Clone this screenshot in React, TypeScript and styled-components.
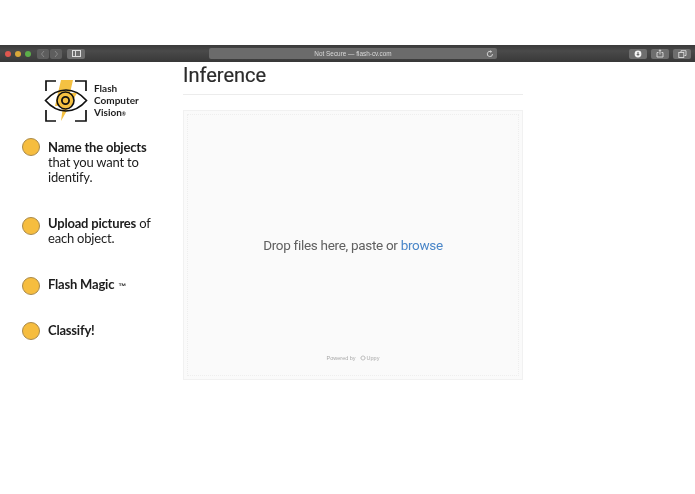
import React from "react";
import styled, { createGlobalStyle } from "styled-components";

const Global = createGlobalStyle`
  html, body { margin: 0; padding: 0; background: #fff; }
  #root { width: 695px; height: 494px; overflow: hidden; }
`;

const Page = styled.div`
  width: 695px;
  height: 494px;
  padding-top: 45px;
  box-sizing: border-box;
  display: flex;
  flex-direction: column;
  background: #fff;
  font-family: "Lato", "Liberation Sans", sans-serif;
  filter: blur(0.35px);
`;

const Toolbar = styled.div`
  height: 17px;
  flex: none;
  display: flex;
  align-items: center;
  background: linear-gradient(#3a3a3a, #4a4a4a 35%, #383838);
  padding: 0 4px 0 5px;
`;

const Light = styled.span<{ $c: string }>`
  width: 6px;
  height: 6px;
  border-radius: 50%;
  margin-right: 4px;
  background: ${(p) => p.$c};
`;

const NavGroup = styled.div`
  display: flex;
  gap: 1px;
  margin-left: 2px;
`;

const ToolButton = styled.div<{ $w?: number; $light?: boolean }>`
  width: ${(p) => p.$w ?? 18}px;
  height: 10px;
  border-radius: 2px;
  background: ${(p) => (p.$light ? "#6e6e6e" : "#5e5e5e")};
  display: flex;
  align-items: center;
  justify-content: center;
`;

const SidebarButton = styled(ToolButton)`
  margin-left: 5px;
`;

const AddressBar = styled.div`
  width: 288px;
  height: 11px;
  margin-left: 124px;
  border-radius: 2px;
  background: #6b6b6b;
  display: flex;
  align-items: center;
  position: relative;
  color: #d8d8d8;
  font: 6.4px "Liberation Sans", sans-serif;
  justify-content: center;
`;

const Reload = styled.svg`
  position: absolute;
  right: 3px;
  top: 1.5px;
`;

const RightTools = styled.div`
  margin-left: auto;
  display: flex;
  gap: 4px;
`;

const Main = styled.div`
  display: flex;
  flex: 1;
  align-items: flex-start;
`;

const Sidebar = styled.aside`
  width: 183px;
  flex: none;
  padding: 17px 0 0 22px;
  box-sizing: border-box;
`;

const Brand = styled.div`
  display: flex;
  align-items: center;
  gap: 6px;
  margin-left: 22px;
`;

const BrandName = styled.div`
  font-weight: 700;
  font-size: 10px;
  line-height: 12px;
  color: #1d1d1d;
`;

const Tiny = styled.span`
  font-size: 5px;
`;

const Steps = styled.ol`
  list-style: none;
  margin: 17px 0 0;
  padding: 0;
  color: #1c1c1c;
`;

const Step = styled.li<{ $h: number }>`
  display: flex;
  gap: 8px;
  height: ${(p) => p.$h}px;
  font-size: 13px;
  letter-spacing: -0.2px;
  line-height: 15px;
`;

const Dot = styled.span<{ $top: number }>`
  width: 16px;
  height: 16px;
  flex: none;
  margin-top: ${(p) => p.$top}px;
  border-radius: 50%;
  background: #f6bd3f;
  border: 1px solid #a98a4c;
`;

const Strong = styled.b`
  font-weight: 700;
`;

const TradeMark = styled.span`
  font: 700 8px "Liberation Sans", sans-serif;
  margin-left: 1px;
`;

const Content = styled.main`
  width: 340px;
  flex: none;
`;

const Title = styled.h1`
  margin: 0;
  height: 32px;
  font: 400 20px/26px "Roboto", "Liberation Sans", sans-serif;
  -webkit-text-stroke: 0.2px #2b2b2b;
  color: #2b2b2b;
  border-bottom: 1px solid #ececec;
`;

const Drop = styled.section`
  margin-top: 15px;
  height: 270px;
  box-sizing: border-box;
  background: #fafafa;
  border: 1px solid #f1f1f1;
  padding: 3px;
`;

const DropInner = styled.div`
  height: 100%;
  box-sizing: border-box;
  border: 1px dotted #eeeeee;
  display: flex;
  flex-direction: column;
  align-items: center;
`;

const DropText = styled.div`
  margin-top: 120px;
  font: 13.5px/20px "Roboto", "Liberation Sans", sans-serif;
  letter-spacing: -0.3px;
  color: #606060;
`;

const Browse = styled.span`
  color: #4a86c8;
`;

const Powered = styled.div`
  margin-top: auto;
  margin-bottom: 13px;
  font: 5.5px/8px "Liberation Sans", sans-serif;
  color: #a8a8a8;
  display: flex;
  align-items: center;
  gap: 4px;
  white-space: nowrap;
`;

const UppyMark = styled.span`
  display: inline-flex;
  align-items: center;
  gap: 1px;
`;

const Logo = () => (
  <svg width="44" height="44" viewBox="0 0 44 44" fill="none" aria-hidden="true">
    <path d="M17 1H29L26 14H33L17 42L19 27H11Z" fill="#f5c142" />
    <path d="M12 2H2V12M31 2H42V12M2 31V42H12M42 31V42H31" stroke="#111" strokeWidth="1.7" />
    <path d="M1.5 21.5C8 14 14 11 22 11C30 11 36 14 42.5 21.5C36 29 30 32 22 32C14 32 8 29 1.5 21.5Z" stroke="#111" strokeWidth="1.7" />
    <circle cx="21.5" cy="21.5" r="8.5" stroke="#111" strokeWidth="1.6" fill="#f5c142" />
    <circle cx="21.5" cy="21.5" r="3.6" stroke="#111" strokeWidth="1.8" />
  </svg>
);

const steps = [
  { h: 76, top: -2, body: <div><Strong>Name the objects</Strong><br />that you want to<br />identify.</div> },
  { h: 61, top: 1, body: <div><Strong>Upload pictures</Strong> of<br />each object.</div> },
  { h: 46, top: 0, body: <div><Strong>Flash Magic</Strong> <TradeMark>™</TradeMark></div> },
  { h: 30, top: -1, body: <div><Strong>Classify!</Strong></div> },
];

export default function App() {
  return (
    <Page>
      <Global />
      <Toolbar>
        <Light $c="#e0574f" />
        <Light $c="#d9a83a" />
        <Light $c="#5cae4a" />
        <NavGroup>
          <ToolButton $w={12}>
            <svg width="6" height="8" viewBox="0 0 6 8" fill="none"><path d="M4 1L1.5 4L4 7" stroke="#888" /></svg>
          </ToolButton>
          <ToolButton $w={12}>
            <svg width="6" height="8" viewBox="0 0 6 8" fill="none"><path d="M2 1L4.5 4L2 7" stroke="#888" /></svg>
          </ToolButton>
        </NavGroup>
        <SidebarButton $light>
          <svg width="9" height="7" viewBox="0 0 9 7" fill="none"><rect x=".5" y=".5" width="8" height="6" stroke="#ddd" /><path d="M3.5 1V6" stroke="#ddd" /></svg>
        </SidebarButton>
        <AddressBar>
          Not Secure — flash-cv.com
          <Reload width="8" height="8" viewBox="0 0 8 8" fill="none">
            <path d="M6.5 4A2.6 2.6 0 1 1 5 1.6M4.5 0.5L5.6 1.7L4.4 2.7" stroke="#ddd" strokeWidth=".9" />
          </Reload>
        </AddressBar>
        <RightTools>
          <ToolButton $light>
            <svg width="8" height="8" viewBox="0 0 8 8"><circle cx="4" cy="4" r="3.4" fill="#f2f2f2" /><path d="M4 2V5M2.8 4L4 5.4L5.2 4" stroke="#555" fill="none" /></svg>
          </ToolButton>
          <ToolButton $light>
            <svg width="8" height="9" viewBox="0 0 8 9" fill="none"><path d="M2.5 3.5H1V8H7V3.5H5.5M4 5.5V.8M2.8 2L4 .8L5.2 2" stroke="#ddd" strokeWidth=".9" /></svg>
          </ToolButton>
          <ToolButton $light>
            <svg width="9" height="8" viewBox="0 0 9 8" fill="none"><rect x=".8" y="2.5" width="5" height="5" stroke="#ddd" strokeWidth=".9" /><path d="M3 2V.7H8V5.5H6.5" stroke="#ddd" strokeWidth=".9" /></svg>
          </ToolButton>
        </RightTools>
      </Toolbar>
      <Main>
        <Sidebar>
          <Brand>
            <Logo />
            <BrandName>Flash<br />Computer<br />Vision<Tiny>®</Tiny></BrandName>
          </Brand>
          <Steps>
            {steps.map((s, i) => (
              <Step key={i} $h={s.h}>
                <Dot $top={s.top} />
                {s.body}
              </Step>
            ))}
          </Steps>
        </Sidebar>
        <Content>
          <Title>Inference</Title>
          <Drop>
            <DropInner>
              <DropText>Drop files here, paste or <Browse>browse</Browse></DropText>
              <Powered>
                Powered by
                <UppyMark>
                  <svg width="6" height="6" viewBox="0 0 6 6" fill="none"><path d="M1 2L3 .8L5 2V4L3 5.2L1 4Z" stroke="#a8a8a8" strokeWidth=".7" /></svg>
                  Uppy
                </UppyMark>
              </Powered>
            </DropInner>
          </Drop>
        </Content>
      </Main>
    </Page>
  );
}
